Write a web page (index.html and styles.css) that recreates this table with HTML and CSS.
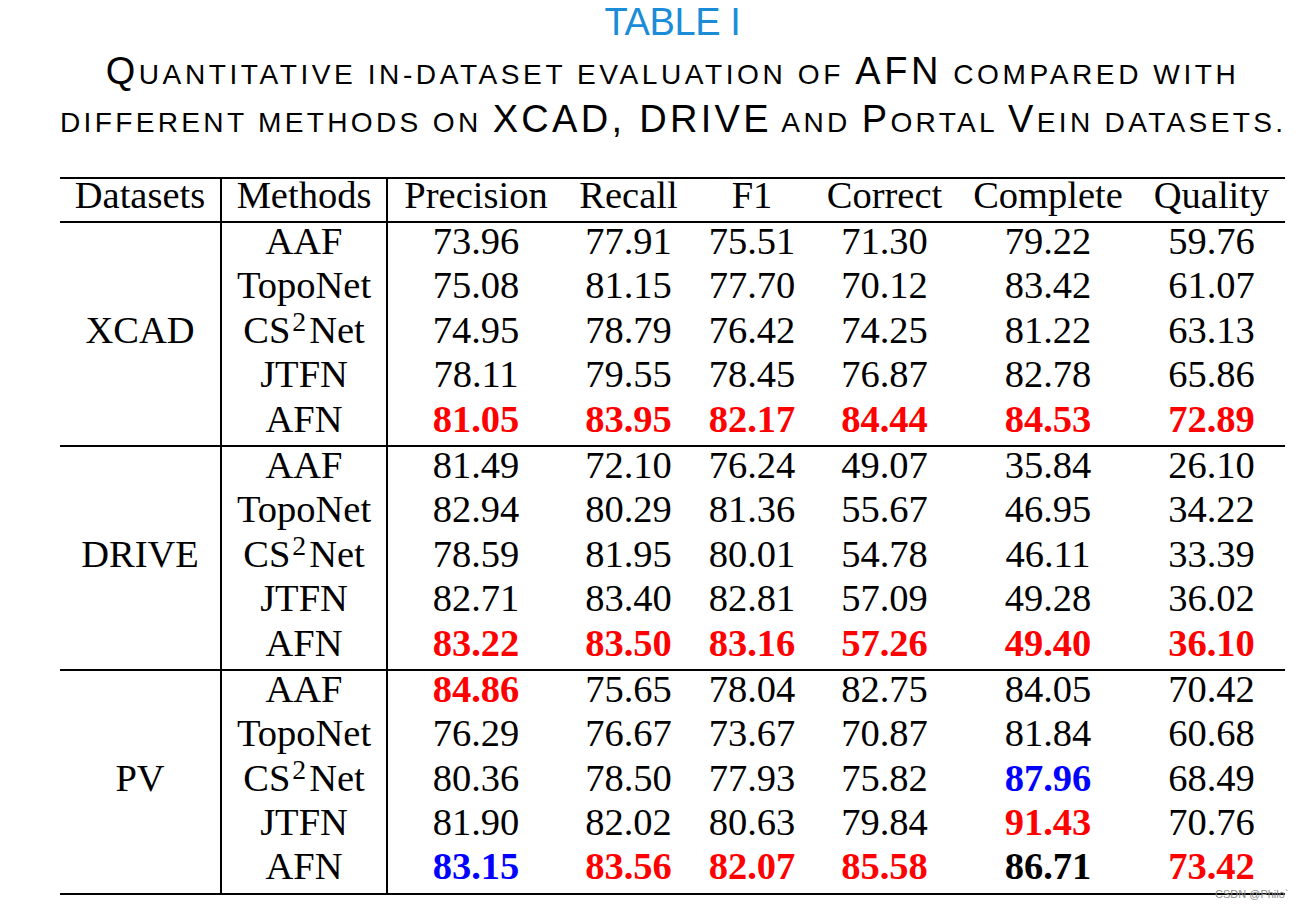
FILE: index.html
```html
<!DOCTYPE html>
<html lang="en">
<head>
<meta charset="utf-8">
<title>Table I</title>
<link rel="stylesheet" href="styles.css">
</head>
<body>
<div class="page">
  <div class="title">TABLE I</div>
  <div class="caption">
    <div class="cap-line first">Q<span class="sc">uantitative in-dataset evaluation of </span>AFN<span class="sc"> compared with</span></div>
    <div class="cap-line second"><span class="sc">different methods on </span>XCAD, DRIVE<span class="sc"> and </span>P<span class="sc">ortal </span>V<span class="sc">ein datasets.</span></div>
  </div>
  <table class="results">
    <colgroup>
      <col class="c-ds"><col class="c-me"><col class="c-pr"><col class="c-re"><col class="c-f1"><col class="c-co"><col class="c-cm"><col class="c-qu">
    </colgroup>
    <thead>
      <tr>
        <th class="vr">Datasets</th><th class="vr">Methods</th><th>Precision</th><th>Recall</th><th>F1</th><th>Correct</th><th>Complete</th><th>Quality</th>
      </tr>
    </thead>
    <tbody>
      <tr><td class="ds vr" rowspan="5">XCAD</td><td class="vr">AAF</td><td>73.96</td><td>77.91</td><td>75.51</td><td>71.30</td><td>79.22</td><td>59.76</td></tr>
      <tr><td class="vr">TopoNet</td><td>75.08</td><td>81.15</td><td>77.70</td><td>70.12</td><td>83.42</td><td>61.07</td></tr>
      <tr><td class="vr">CS<sup>2</sup>Net</td><td>74.95</td><td>78.79</td><td>76.42</td><td>74.25</td><td>81.22</td><td>63.13</td></tr>
      <tr><td class="vr">JTFN</td><td>78.11</td><td>79.55</td><td>78.45</td><td>76.87</td><td>82.78</td><td>65.86</td></tr>
      <tr><td class="vr">AFN</td><td class="red">81.05</td><td class="red">83.95</td><td class="red">82.17</td><td class="red">84.44</td><td class="red">84.53</td><td class="red">72.89</td></tr>
    </tbody>
    <tbody class="group">
      <tr><td class="ds vr" rowspan="5">DRIVE</td><td class="vr">AAF</td><td>81.49</td><td>72.10</td><td>76.24</td><td>49.07</td><td>35.84</td><td>26.10</td></tr>
      <tr><td class="vr">TopoNet</td><td>82.94</td><td>80.29</td><td>81.36</td><td>55.67</td><td>46.95</td><td>34.22</td></tr>
      <tr><td class="vr">CS<sup>2</sup>Net</td><td>78.59</td><td>81.95</td><td>80.01</td><td>54.78</td><td>46.11</td><td>33.39</td></tr>
      <tr><td class="vr">JTFN</td><td>82.71</td><td>83.40</td><td>82.81</td><td>57.09</td><td>49.28</td><td>36.02</td></tr>
      <tr><td class="vr">AFN</td><td class="red">83.22</td><td class="red">83.50</td><td class="red">83.16</td><td class="red">57.26</td><td class="red">49.40</td><td class="red">36.10</td></tr>
    </tbody>
    <tbody class="group last">
      <tr><td class="ds vr" rowspan="5">PV</td><td class="vr">AAF</td><td class="red">84.86</td><td>75.65</td><td>78.04</td><td>82.75</td><td>84.05</td><td>70.42</td></tr>
      <tr><td class="vr">TopoNet</td><td>76.29</td><td>76.67</td><td>73.67</td><td>70.87</td><td>81.84</td><td>60.68</td></tr>
      <tr><td class="vr">CS<sup>2</sup>Net</td><td>80.36</td><td>78.50</td><td>77.93</td><td>75.82</td><td class="blue">87.96</td><td>68.49</td></tr>
      <tr><td class="vr">JTFN</td><td>81.90</td><td>82.02</td><td>80.63</td><td>79.84</td><td class="red">91.43</td><td>70.76</td></tr>
      <tr><td class="vr">AFN</td><td class="blue">83.15</td><td class="red">83.56</td><td class="red">82.07</td><td class="red">85.58</td><td class="bold">86.71</td><td class="red">73.42</td></tr>
    </tbody>
  </table>
  <div class="watermark">CSDN @Philo`</div>
</div>
</body>
</html>
```
FILE: styles.css
```css
html, body {
  margin: 0;
  padding: 0;
  background: #ffffff;
}

.page {
  position: relative;
  width: 1225px;
  margin-left: 60px;
  height: 912px;
}

.title {
  font-family: "Liberation Sans", Arial, sans-serif;
  font-size: 38px;
  line-height: 44px;
  letter-spacing: -0.4px;
  color: #1a8cd8;
  text-align: center;
}

.caption {
  margin-top: 3px;
  font-family: "Liberation Sans", Arial, sans-serif;
  font-size: 38px;
  line-height: 48px;
  color: #000;
  text-align: center;
}

.cap-line {
  white-space: nowrap;
}

.cap-line.first {
  letter-spacing: 3.55px;
}

.cap-line.second {
  letter-spacing: 3.3px;
}

.sc {
  font-size: 0.74em;
  line-height: 1;
  text-transform: uppercase;
}

.results {
  margin-top: 34px;
  width: 1225px;
  table-layout: fixed;
  border-collapse: separate;
  border-spacing: 0;
  font-family: "Liberation Serif", "Times New Roman", serif;
  font-size: 38.5px;
  color: #000;
}

.c-ds { width: 162px; }
.c-me { width: 166px; }
.c-pr { width: 176px; }
.c-re { width: 129px; }
.c-f1 { width: 118px; }
.c-co { width: 147px; }
.c-cm { width: 180px; }
.c-qu { width: 147px; }

.results th {
  font-weight: normal;
  line-height: 32px;
  padding: 0 0 10px 0;
  text-align: center;
  white-space: nowrap;
  border-top: 2px solid #000;
  border-bottom: 2px solid #000;
}

.results td {
  line-height: 36px;
  padding: 0 0 8.4px 0;
  text-align: center;
  vertical-align: top;
  white-space: nowrap;
}

.results td.ds {
  vertical-align: middle;
}

.results .vr {
  border-right: 2px solid #000;
}

.group tr:first-child td {
  border-top: 2px solid #000;
}

.last tr:last-child td,
.last td.ds {
  border-bottom: 2px solid #000;
}

.results sup {
  font-size: 0.72em;
  line-height: 0;
  vertical-align: 0.42em;
  margin: 0 3px 0 2px;
}

.red {
  color: #ff0000;
  font-weight: bold;
}

.blue {
  color: #0000ff;
  font-weight: bold;
}

.bold {
  font-weight: bold;
}

.watermark {
  position: absolute;
  left: 1155px;
  top: 888px;
  font-family: "Liberation Sans", Arial, sans-serif;
  font-size: 11px;
  line-height: 13px;
  color: #8c8c8c;
  white-space: nowrap;
}
```
